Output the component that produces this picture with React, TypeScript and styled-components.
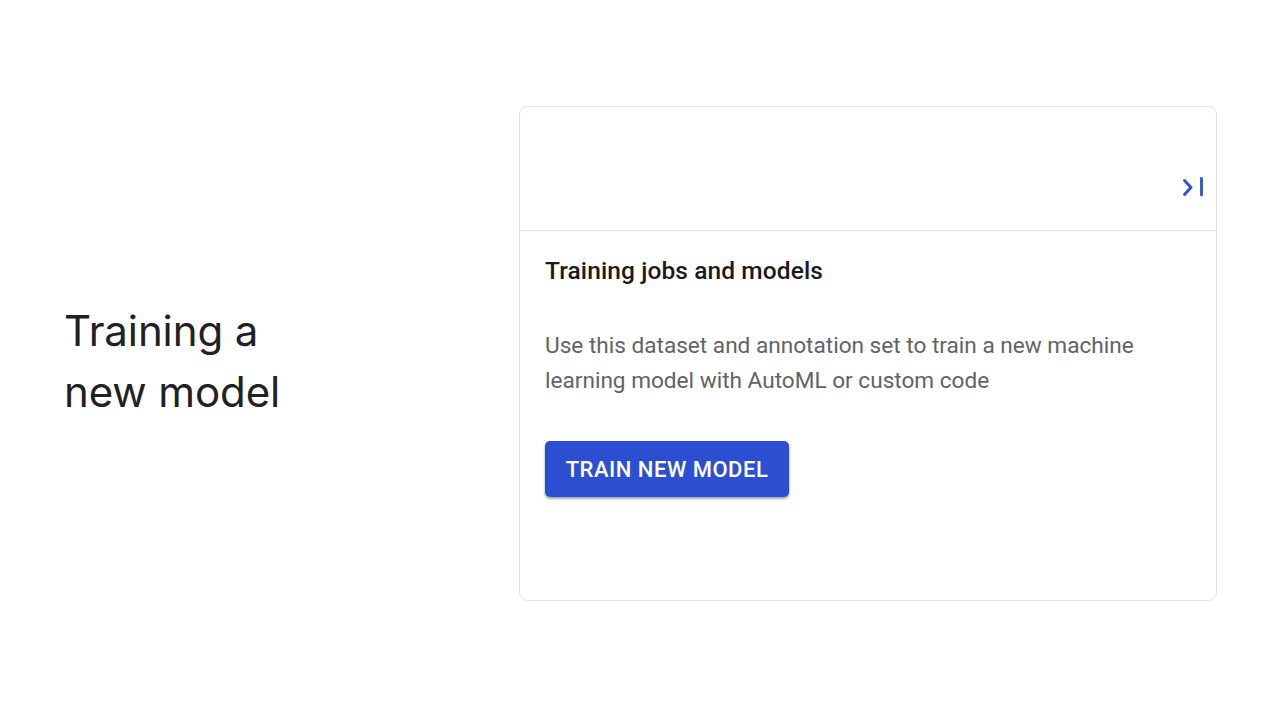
import styled, { createGlobalStyle } from "styled-components";

const GlobalStyle = createGlobalStyle`
  body {
    margin: 0;
    background: #ffffff;
    font-family: Roboto, "Liberation Sans", sans-serif;
  }
`;

// Layout
const Page = styled.div`
  width: 1280px;
  height: 720px;
  display: flex;
  align-items: flex-start;
  padding: 106px 0 0 64px;
  box-sizing: border-box;
`;

const Intro = styled.div`
  width: 455px;
  height: 494px;
  display: flex;
  align-items: center;
`;

const Title = styled.h1`
  margin: 0;
  font-family: Inter, "Open Sans", sans-serif;
  font-weight: 400;
  font-size: 42px;
  line-height: 61px;
  color: #202124;
  letter-spacing: -0.1px;
  padding-top: 16px;
`;

const Card = styled.section`
  width: 698px;
  height: 495px;
  box-sizing: border-box;
  border: 1px solid #e0e0e0;
  border-radius: 9px;
  display: flex;
  flex-direction: column;
  overflow: hidden;
`;

const CardHeader = styled.div`
  height: 124px;
  border-bottom: 1px solid #e0e0e0;
  display: flex;
  justify-content: flex-end;
  align-items: flex-end;
  padding: 0 9px 29px 0;
  box-sizing: border-box;
`;

const CardBody = styled.div`
  padding: 25px 25px 0;
  display: flex;
  flex-direction: column;
  align-items: flex-start;
`;

const Heading = styled.h2`
  margin: 0;
  font-size: 24.5px;
  font-weight: 500;
  line-height: 30px;
  color: #1a1a1a;
  letter-spacing: 0.1px;
`;

const Description = styled.p`
  margin: 42px 0 0;
  font-size: 22.6px;
  line-height: 35px;
  color: #5f6368;
  max-width: 620px;
`;

const PrimaryButton = styled.button`
  margin-top: 43px;
  width: 244px;
  height: 56px;
  padding: 0;
  border: none;
  border-radius: 5px;
  background: #2b4fd0;
  color: #ffffff;
  font-family: Roboto, "Liberation Sans", sans-serif;
  font-size: 22px;
  font-weight: 500;
  letter-spacing: 0.5px;
  box-shadow: 0 2px 3px rgba(0, 0, 0, 0.3), 0 1px 2px rgba(0, 0, 0, 0.15);
  cursor: pointer;
`;

const CollapseIcon = () => (
  <svg width="26" height="26" viewBox="0 0 26 26" fill="none">
    <path
      d="M3.5 5.5 L10 12.5 L3.5 19.5"
      stroke="#2f52c9"
      strokeWidth="3"
      strokeLinecap="round"
      strokeLinejoin="round"
    />
    <path d="M20.5 3.5 V20" stroke="#2f52c9" strokeWidth="2.8" strokeLinecap="round" />
  </svg>
);

export default function App() {
  return (
    <>
      <GlobalStyle />
      <Page>
        <Intro>
          <Title>
            Training a
            <br />
            new model
          </Title>
        </Intro>
        <Card>
          <CardHeader>
            <CollapseIcon />
          </CardHeader>
          <CardBody>
            <Heading>Training jobs and models</Heading>
            <Description>
              Use this dataset and annotation set to train a new machine
              learning model with AutoML or custom code
            </Description>
            <PrimaryButton>TRAIN NEW MODEL</PrimaryButton>
          </CardBody>
        </Card>
      </Page>
    </>
  );
}
